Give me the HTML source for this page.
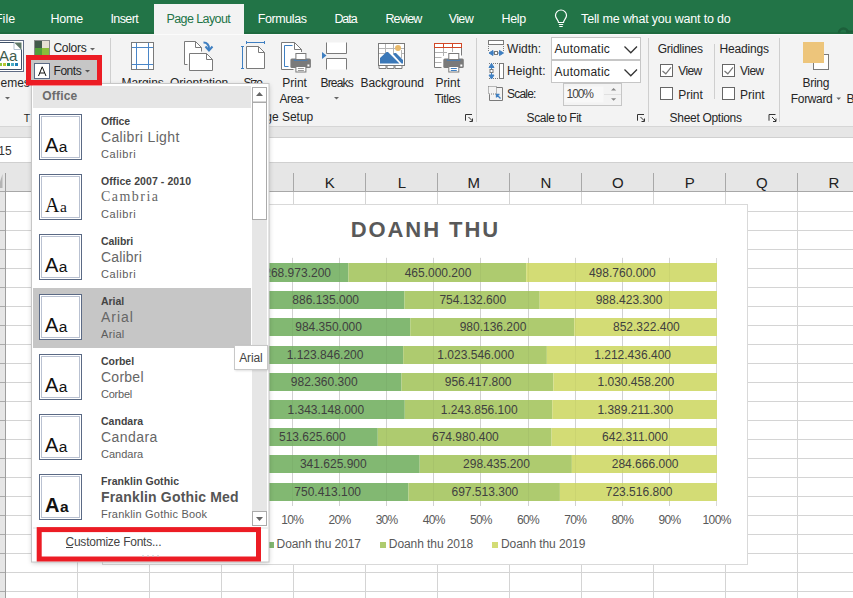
<!DOCTYPE html>
<html><head><meta charset="utf-8">
<style>
*{margin:0;padding:0;box-sizing:border-box}
html,body{width:853px;height:598px;overflow:hidden}
body{position:relative;background:#fff;font-family:"Liberation Sans",sans-serif}
.a{position:absolute}
.t{position:absolute;white-space:nowrap;line-height:1}
svg{position:absolute;overflow:visible}
</style></head><body>
<div class="a" style="left:0px;top:0px;width:853px;height:34px;background:#227447"></div>
<div class="a" style="left:0px;top:32px;width:853px;height:1px;background:#1f6b40"></div>
<div class="a" style="left:0px;top:33px;width:853px;height:1px;background:#1d6a3e"></div>
<div class="a" style="left:154px;top:4px;width:90px;height:30px;background:#f3f3f3"></div>
<div class="t" style="left:50.50px;top:13.42px;font-size:12.5px;color:#fff;letter-spacing:-0.215px;">Home</div>
<div class="t" style="left:110.50px;top:13.42px;font-size:12.5px;color:#fff;letter-spacing:-0.613px;">Insert</div>
<div class="t" style="left:257.70px;top:13.42px;font-size:12.5px;color:#fff;letter-spacing:-0.399px;">Formulas</div>
<div class="t" style="left:334.40px;top:13.42px;font-size:12.5px;color:#fff;letter-spacing:-1.068px;">Data</div>
<div class="t" style="left:385.40px;top:13.42px;font-size:12.5px;color:#fff;letter-spacing:-0.797px;">Review</div>
<div class="t" style="left:448.70px;top:13.42px;font-size:12.5px;color:#fff;letter-spacing:-0.623px;">View</div>
<div class="t" style="left:501.50px;top:13.42px;font-size:12.5px;color:#fff;letter-spacing:-0.370px;">Help</div>
<div class="t" style="left:581.10px;top:13.42px;font-size:12.5px;color:#fff;letter-spacing:-0.175px;">Tell me what you want to do</div>
<div class="t" style="left:-5.04px;top:13.42px;font-size:12.5px;color:#fff;">File</div>
<div class="t" style="left:166.40px;top:13.42px;font-size:12.5px;color:#227447;letter-spacing:-0.580px;">Page Layout</div>
<svg style="left:554px;top:10px" width="14" height="18" viewBox="0 0 14 18"><path d="M4.5 12.5 C4.5 10 1.5 8.5 1.5 5.5 A5.5 5.5 0 0 1 12.5 5.5 C12.5 8.5 9.5 10 9.5 12.5 Z" fill="none" stroke="#fff" stroke-width="1.2"/><path d="M4.8 14.5 H9.2 M5.3 16.5 H8.7" stroke="#fff" stroke-width="1.2"/></svg>
<svg style="left:0;top:0" width="853" height="34" viewBox="0 0 853 34"><path d="M839 33 A4.5 4.5 0 0 1 848 33" fill="none" stroke="#1c5f3a" stroke-width="2.5"/><path d="M846 31.5 H853" stroke="#1c5f3a" stroke-width="2"/></svg>
<div class="a" style="left:0px;top:34px;width:853px;height:92px;background:#f3f3f3"></div>
<div class="a" style="left:0px;top:34px;width:853px;height:1px;background:#fbfbfb"></div>
<div class="a" style="left:0px;top:126px;width:853px;height:1px;background:#d6d6d6"></div>
<div class="a" style="left:0px;top:127px;width:853px;height:10px;background:#e6e6e6"></div>
<div class="a" style="left:0px;top:137px;width:853px;height:1px;background:#d0d0d0"></div>
<div class="a" style="left:0px;top:138px;width:853px;height:24px;background:#fff"></div>
<div class="a" style="left:0px;top:162px;width:853px;height:1px;background:#d0d0d0"></div>
<div class="t" style="left:-1.75px;top:144.84px;font-size:12px;color:#333;">15</div>
<div class="a" style="left:0px;top:163px;width:853px;height:28px;background:#e6e6e6"></div>
<div class="a" style="left:0px;top:191px;width:853px;height:1px;background:#a8a8a8"></div>
<div class="a" style="left:5px;top:173px;width:1px;height:19px;background:#a8a8a8"></div>
<svg style="left:0;top:0" width="853" height="598" viewBox="0 0 853 598"><line x1="110.5" y1="38" x2="110.5" y2="122" stroke="#cfcfcf" stroke-width="1"/><line x1="476.5" y1="38" x2="476.5" y2="122" stroke="#cfcfcf" stroke-width="1"/><line x1="648.5" y1="38" x2="648.5" y2="122" stroke="#cfcfcf" stroke-width="1"/><line x1="779.5" y1="38" x2="779.5" y2="122" stroke="#cfcfcf" stroke-width="1"/><line x1="714.5" y1="44" x2="714.5" y2="99" stroke="#cfcfcf" stroke-width="1"/><rect x="-5.5" y="40.5" width="29" height="31" fill="#fff" stroke="#5f6b84"/><path d="M-3.5 42.5 H14 L21.5 50 V69.5 H-3.5" fill="#fff" stroke="#3e5068" stroke-width="1"/><path d="M14 42.5 H21.5 V50 Z" fill="#5f7868"/><path d="M14 42.5 V49.5 H21" fill="#fff" stroke="#9fb0c4" stroke-width="0.8"/><text x="-1" y="61" font-size="15" fill="#3f5b4b" font-family="Liberation Sans">Aa</text><rect x="-1" y="63" width="3" height="3" fill="#8dc63f"/><rect x="3" y="63" width="3" height="3" fill="#b8c832"/><rect x="7" y="63" width="3" height="3" fill="#1e9168"/><rect x="11" y="63" width="3" height="3" fill="#4bacc6"/><rect x="15" y="63" width="3" height="3" fill="#1f80b8"/><rect x="34.5" y="40.5" width="15" height="15" fill="none" stroke="#8a8a8a"/><rect x="35" y="41" width="7" height="7" fill="#42584a"/><rect x="42" y="41" width="7" height="7" fill="#e7e0d3"/><rect x="35" y="48" width="7" height="7" fill="#529f3a"/><rect x="42" y="48" width="7" height="7" fill="#8bbd3a"/><path d="M90 48 h5 l-2.5 2.5 z" fill="#666"/><rect x="28.5" y="57.5" width="71" height="25" fill="#c6c6c6" stroke="#ec1c24" stroke-width="5"/><rect x="34.5" y="63.5" width="15" height="15" fill="#fff" stroke="#5b6a85"/><path d="M38.5 76 L42.2 66.8 L46 76 M39.8 73 H44.6" fill="none" stroke="#111" stroke-width="1"/><path d="M85 70 h5 l-2.5 2.5 z" fill="#555"/><path d="M5 97 h5 l-2.5 2.5 z" fill="#666"/><rect x="131.5" y="42.5" width="22" height="27" fill="#fff" stroke="#7a7a7a"/><path d="M136.5 43 V69 M148.5 43 V69 M132 47.5 H153 M132 64.5 H153" stroke="#4a86c8" stroke-width="1"/><path d="M187.5 64.5 H184.5 V41.5 H195.5 L201.5 47.5 V51.5" fill="#fff" stroke="#7a7a7a"/><path d="M195.5 41.5 V47.5 H201.5" fill="none" stroke="#7a7a7a"/><path d="M189.5 53.5 H206.5 L212.5 59.5 V70.5 H189.5 Z" fill="#fff" stroke="#7a7a7a"/><path d="M206.5 53.5 V59.5 H212.5" fill="none" stroke="#7a7a7a"/><path d="M203.5 42.5 Q209 42.5 209 49" fill="none" stroke="#3f7fc1" stroke-width="2"/><path d="M205.5 46.5 L209 50.5 L212.5 46.5" fill="none" stroke="#3f7fc1" stroke-width="2"/><path d="M246.5 46.5 H258.5 L264.5 52.5 V68.5 H246.5 Z" fill="#fff" stroke="#7a7a7a"/><path d="M258.5 46.5 V52.5 H264.5" fill="none" stroke="#7a7a7a"/><path d="M246.5 42.5 H264.5 M246.5 41 V44 M264.5 41 V44 M242.5 46.5 V68.5 M241 46.5 H244 M241 68.5 H244" stroke="#3f7fc1" stroke-width="1"/><path d="M293.5 69.5 H281.5 V42.5 H294.5 L301.5 49.5 V52" fill="#fff" stroke="#7a7a7a"/><path d="M294.5 42.5 V49.5 H301.5" fill="none" stroke="#7a7a7a"/><path d="M292.5 45.5 H284.5 V66.5 H288.5" fill="none" stroke="#3f7fc1"/><rect x="290.4" y="58.5" width="20.5" height="9.5" rx="1.5" fill="#7a7a7a"/><rect x="293.9" y="59.5" width="13.5" height="1.2" fill="#3f7fc1"/><rect x="295.9" y="53.5" width="10" height="6" fill="#fff" stroke="#7a7a7a"/><rect x="295.9" y="66.5" width="10" height="5.5" fill="#fff" stroke="#7a7a7a"/><path d="M297.9 68.5 H303.9 M297.9 70.5 H303.9" stroke="#999" stroke-width="1"/><rect x="307.4" y="64.5" width="2" height="2" fill="#fff"/><path d="M326.5 42.5 V53.5 H346.5 V42.5" fill="#fff" stroke="#7a7a7a"/><path d="M326.5 69.5 V58.5 H346.5 V69.5" fill="#fff" stroke="#7a7a7a"/><path d="M322 52 L326.5 55.5 L322 59 Z" fill="#3f7fc1"/><path d="M334 97 h5 l-2.5 2.5 z" fill="#666"/><path d="M305 97 h5 l-2.5 2.5 z" fill="#666"/><rect x="378.5" y="43.5" width="26" height="22" fill="#fff" stroke="#7a7a7a"/><path d="M385.5 44 V58 M393.5 44 V54 M401.5 50 V58 M379 48.5 H404 M379 53.5 H385 M401 53.5 H404" stroke="#b5b5b5" stroke-width="1"/><path d="M380 58 L386.5 52 H388 L399.5 63.5 H380 Z" fill="#3b78b8"/><path d="M393 54 L394.5 53 H396 L403 60 V63.5 H401.5 Z" fill="#3b78b8"/><circle cx="398" cy="48" r="3" fill="#e8b96a"/><path d="M379 66 V68.5 H386 V66 M387 66 V68.5 H394 V66 M395 66 V68.5 H402 V66" fill="#fff" stroke="#7a7a7a" stroke-width="1"/><rect x="434.5" y="47.5" width="27" height="20" fill="#fff"/><path d="M434.5 47.5 V67.5 H441.5 M461.5 47.5 V55.5" fill="none" stroke="#7a7a7a"/><path d="M443.5 47.5 V56 M452.5 47.5 V52 M435 52.5 H447 M435 57.5 H441.5 M435 62.5 H441.5" stroke="#b0b0b0"/><rect x="435" y="48" width="26" height="19" fill="#fff" opacity="0"/><rect x="434.5" y="43.5" width="27" height="4" fill="#fff" stroke="#d24726"/><path d="M443.5 43.5 V47.5 M452.5 43.5 V47.5" stroke="#d24726"/><rect x="443.3" y="58.5" width="20.5" height="9.5" rx="1.5" fill="#7a7a7a"/><rect x="446.8" y="59.5" width="13.5" height="1.2" fill="#3f7fc1"/><rect x="448.8" y="53.5" width="10" height="6" fill="#fff" stroke="#7a7a7a"/><rect x="448.8" y="66.5" width="10" height="5.5" fill="#fff" stroke="#7a7a7a"/><path d="M450.8 68.5 H456.8 M450.8 70.5 H456.8" stroke="#3f7fc1" stroke-width="1"/><rect x="460.3" y="64.5" width="2" height="2" fill="#fff"/><path d="M465.5 120.7 V114.5 H472.0" fill="none" stroke="#333" stroke-width="1"/><path d="M468.5 117 L472.5 121 M472.5 118.5 V121.5 H469.5" fill="none" stroke="#333" stroke-width="1"/><path d="M637.5 120.7 V114.5 H644.0" fill="none" stroke="#333" stroke-width="1"/><path d="M640.5 117 L644.5 121 M644.5 118.5 V121.5 H641.5" fill="none" stroke="#333" stroke-width="1"/><path d="M769 120.7 V114.5 H775.5" fill="none" stroke="#333" stroke-width="1"/><path d="M772 117 L776 121 M776 118.5 V121.5 H773" fill="none" stroke="#333" stroke-width="1"/><rect x="488.5" y="40.5" width="15" height="4" fill="#fff" stroke="#7a7a7a"/><path d="M488.5 46 V52 M503.5 46 V52" stroke="#7a7a7a" stroke-dasharray="1 1"/><path d="M489 53 L493 50.5 V55.5 Z M503.5 53 L499.5 50.5 V55.5 Z M492 53 H500" fill="#3f7fc1" stroke="#3f7fc1" stroke-width="1"/><rect x="494.5" y="51.5" width="3" height="3" fill="#fff" stroke="#7a7a7a"/><rect x="499.5" y="63.5" width="4" height="15" fill="#fff" stroke="#7a7a7a"/><path d="M489 63.5 H498 M489 78.5 H498" stroke="#7a7a7a" stroke-dasharray="1 1"/><path d="M491.5 63.5 L489 67.5 H494 Z M491.5 79 L489 75 H494 Z M491.5 66 V76" fill="#3f7fc1" stroke="#3f7fc1"/><rect x="490" y="69.5" width="3" height="3" fill="#fff" stroke="#7a7a7a"/><path d="M496.5 87.5 H502.5 V100.5 H489.5 V94.5" fill="none" stroke="#7a7a7a"/><rect x="488.5" y="86.5" width="8" height="7.5" fill="none" stroke="#7a7a7a" stroke-dasharray="1 1"/><path d="M500.5 98.5 L496.5 94.5 M496.5 97.5 V94.5 H499.5" fill="none" stroke="#3f7fc1" stroke-width="1.3"/><rect x="551.5" y="37.5" width="89" height="22" fill="#fff" stroke="#c6c6c6"/><rect x="551.5" y="60.5" width="89" height="22" fill="#fff" stroke="#c6c6c6"/><path d="M624.5 46.5 L630.8 52.8 L637 46.5 M624.5 69.5 L630.8 75.8 L637 69.5" fill="none" stroke="#333" stroke-width="1.3"/><rect x="563.5" y="83.5" width="58" height="22" fill="#f3f3f3" stroke="#c6c6c6"/><rect x="564.5" y="86.5" width="39" height="16" fill="#f8f8f8"/><path d="M604 94.5 H621" stroke="#e0e0e0"/><path d="M611 90.5 L613.6 88 L616.2 90.5 Z M611 98.2 L613.6 100.7 L616.2 98.2 Z" fill="#888"/><rect x="660.5" y="64.5" width="12" height="12" fill="#fff" stroke="#666"/><path d="M662.5 71.0 L665.8 73.8 L671 67.3" fill="none" stroke="#777" stroke-width="1.2"/><rect x="660.5" y="87.5" width="12" height="12" fill="#fff" stroke="#666"/><rect x="722.5" y="64.5" width="12" height="12" fill="#fff" stroke="#666"/><path d="M724.5 71.0 L727.8 73.8 L733 67.3" fill="none" stroke="#777" stroke-width="1.2"/><rect x="722.5" y="87.5" width="12" height="12" fill="#fff" stroke="#666"/><rect x="813.5" y="54.5" width="15" height="15" fill="#fff" stroke="#7a7a7a"/><rect x="803" y="42" width="21" height="21" fill="#edc57b"/><path d="M836.4 97.5 h4.6 l-2.3 2.5 z" fill="#666"/></svg>
<div class="t" style="left:53.50px;top:42.24px;font-size:12px;color:#262626;letter-spacing:-0.295px;">Colors</div>
<div class="t" style="left:53.50px;top:65.44px;font-size:12px;color:#262626;letter-spacing:-0.453px;">Fonts</div>
<div class="t" style="left:121.60px;top:76.74px;font-size:12px;color:#262626;letter-spacing:-0.080px;">Margins</div>
<div class="t" style="left:170.10px;top:76.74px;font-size:12px;color:#262626;letter-spacing:-0.060px;">Orientation</div>
<div class="t" style="left:243.40px;top:76.74px;font-size:12px;color:#262626;letter-spacing:-1.248px;">Size</div>
<div class="t" style="left:282.30px;top:76.74px;font-size:12px;color:#262626;letter-spacing:-0.019px;">Print</div>
<div class="t" style="left:279.40px;top:92.74px;font-size:12px;color:#262626;letter-spacing:-0.450px;">Area</div>
<div class="t" style="left:320.50px;top:76.74px;font-size:12px;color:#262626;letter-spacing:-0.830px;">Breaks</div>
<div class="t" style="left:360.60px;top:76.74px;font-size:12px;color:#262626;letter-spacing:-0.083px;">Background</div>
<div class="t" style="left:435.40px;top:76.74px;font-size:12px;color:#262626;letter-spacing:-0.019px;">Print</div>
<div class="t" style="left:434.40px;top:92.74px;font-size:12px;color:#262626;letter-spacing:-0.365px;">Titles</div>
<div class="t" style="left:507.10px;top:42.94px;font-size:12px;color:#262626;letter-spacing:-0.002px;">Width:</div>
<div class="t" style="left:507.10px;top:65.44px;font-size:12px;color:#262626;letter-spacing:0.063px;">Height:</div>
<div class="t" style="left:507.10px;top:88.44px;font-size:12px;color:#262626;letter-spacing:-0.810px;">Scale:</div>
<div class="t" style="left:526.60px;top:111.64px;font-size:12px;color:#262626;letter-spacing:-0.448px;">Scale to Fit</div>
<div class="t" style="left:657.70px;top:42.84px;font-size:12px;color:#262626;letter-spacing:-0.256px;">Gridlines</div>
<div class="t" style="left:719.40px;top:42.84px;font-size:12px;color:#262626;letter-spacing:-0.172px;">Headings</div>
<div class="t" style="left:678.20px;top:65.44px;font-size:12px;color:#262626;letter-spacing:-0.565px;">View</div>
<div class="t" style="left:678.20px;top:88.54px;font-size:12px;color:#262626;letter-spacing:-0.019px;">Print</div>
<div class="t" style="left:740.10px;top:65.44px;font-size:12px;color:#262626;letter-spacing:-0.565px;">View</div>
<div class="t" style="left:740.10px;top:88.54px;font-size:12px;color:#262626;letter-spacing:-0.019px;">Print</div>
<div class="t" style="left:669.60px;top:111.54px;font-size:12px;color:#262626;letter-spacing:-0.304px;">Sheet Options</div>
<div class="t" style="left:802.60px;top:76.64px;font-size:12px;color:#262626;letter-spacing:-0.304px;">Bring</div>
<div class="t" style="left:790.80px;top:92.54px;font-size:12px;color:#262626;letter-spacing:-0.335px;">Forward</div>
<div class="t" style="left:846.40px;top:92.54px;font-size:12px;color:#262626;">B</div>
<div class="t" style="left:0.50px;top:76.84px;font-size:12px;color:#262626;">emes</div>
<div class="t" style="left:23.80px;top:112.61px;font-size:10.5px;color:#262626;">T</div>
<div class="t" style="left:250.58px;top:111.24px;font-size:12px;color:#262626;">Page Setup</div>
<div class="t" style="left:554.50px;top:42.94px;font-size:12px;color:#262626;letter-spacing:0.243px;">Automatic</div>
<div class="t" style="left:554.50px;top:65.54px;font-size:12px;color:#262626;letter-spacing:0.243px;">Automatic</div>
<div class="t" style="left:566.60px;top:88.24px;font-size:12px;color:#444;letter-spacing:-1.131px;">100%</div>
<svg style="left:0;top:0" width="853" height="598" viewBox="0 0 853 598"><rect x="0" y="192" width="5" height="406" fill="#e6e6e6"/><line x1="0" y1="211.5" x2="853" y2="211.5" stroke="#d4d4d4"/><line x1="0" y1="230.5" x2="853" y2="230.5" stroke="#d4d4d4"/><line x1="0" y1="249.5" x2="853" y2="249.5" stroke="#d4d4d4"/><line x1="0" y1="268.5" x2="853" y2="268.5" stroke="#d4d4d4"/><line x1="0" y1="287.5" x2="853" y2="287.5" stroke="#d4d4d4"/><line x1="0" y1="306.5" x2="853" y2="306.5" stroke="#d4d4d4"/><line x1="0" y1="325.5" x2="853" y2="325.5" stroke="#d4d4d4"/><line x1="0" y1="344.5" x2="853" y2="344.5" stroke="#d4d4d4"/><line x1="0" y1="363.5" x2="853" y2="363.5" stroke="#d4d4d4"/><line x1="0" y1="382.5" x2="853" y2="382.5" stroke="#d4d4d4"/><line x1="0" y1="401.5" x2="853" y2="401.5" stroke="#d4d4d4"/><line x1="0" y1="420.5" x2="853" y2="420.5" stroke="#d4d4d4"/><line x1="0" y1="439.5" x2="853" y2="439.5" stroke="#d4d4d4"/><line x1="0" y1="458.5" x2="853" y2="458.5" stroke="#d4d4d4"/><line x1="0" y1="477.5" x2="853" y2="477.5" stroke="#d4d4d4"/><line x1="0" y1="496.5" x2="853" y2="496.5" stroke="#d4d4d4"/><line x1="0" y1="515.5" x2="853" y2="515.5" stroke="#d4d4d4"/><line x1="0" y1="534.5" x2="853" y2="534.5" stroke="#d4d4d4"/><line x1="0" y1="553.5" x2="853" y2="553.5" stroke="#d4d4d4"/><line x1="0" y1="572.5" x2="853" y2="572.5" stroke="#d4d4d4"/><line x1="0" y1="591.5" x2="853" y2="591.5" stroke="#d4d4d4"/><line x1="77.5" y1="192" x2="77.5" y2="598" stroke="#d4d4d4"/><line x1="77.5" y1="173" x2="77.5" y2="191" stroke="#a8a8a8"/><line x1="149.5" y1="192" x2="149.5" y2="598" stroke="#d4d4d4"/><line x1="149.5" y1="173" x2="149.5" y2="191" stroke="#a8a8a8"/><line x1="221.5" y1="192" x2="221.5" y2="598" stroke="#d4d4d4"/><line x1="221.5" y1="173" x2="221.5" y2="191" stroke="#a8a8a8"/><line x1="293.5" y1="192" x2="293.5" y2="598" stroke="#d4d4d4"/><line x1="293.5" y1="173" x2="293.5" y2="191" stroke="#a8a8a8"/><line x1="365.5" y1="192" x2="365.5" y2="598" stroke="#d4d4d4"/><line x1="365.5" y1="173" x2="365.5" y2="191" stroke="#a8a8a8"/><line x1="437.5" y1="192" x2="437.5" y2="598" stroke="#d4d4d4"/><line x1="437.5" y1="173" x2="437.5" y2="191" stroke="#a8a8a8"/><line x1="509.5" y1="192" x2="509.5" y2="598" stroke="#d4d4d4"/><line x1="509.5" y1="173" x2="509.5" y2="191" stroke="#a8a8a8"/><line x1="581.5" y1="192" x2="581.5" y2="598" stroke="#d4d4d4"/><line x1="581.5" y1="173" x2="581.5" y2="191" stroke="#a8a8a8"/><line x1="653.5" y1="192" x2="653.5" y2="598" stroke="#d4d4d4"/><line x1="653.5" y1="173" x2="653.5" y2="191" stroke="#a8a8a8"/><line x1="725.5" y1="192" x2="725.5" y2="598" stroke="#d4d4d4"/><line x1="725.5" y1="173" x2="725.5" y2="191" stroke="#a8a8a8"/><line x1="797.5" y1="192" x2="797.5" y2="598" stroke="#d4d4d4"/><line x1="797.5" y1="173" x2="797.5" y2="191" stroke="#a8a8a8"/><line x1="0" y1="211.5" x2="5" y2="211.5" stroke="#ababab"/><line x1="0" y1="230.5" x2="5" y2="230.5" stroke="#ababab"/><line x1="0" y1="249.5" x2="5" y2="249.5" stroke="#ababab"/><line x1="0" y1="268.5" x2="5" y2="268.5" stroke="#ababab"/><line x1="0" y1="287.5" x2="5" y2="287.5" stroke="#ababab"/><line x1="0" y1="306.5" x2="5" y2="306.5" stroke="#ababab"/><line x1="0" y1="325.5" x2="5" y2="325.5" stroke="#ababab"/><line x1="0" y1="344.5" x2="5" y2="344.5" stroke="#ababab"/><line x1="0" y1="363.5" x2="5" y2="363.5" stroke="#ababab"/><line x1="0" y1="382.5" x2="5" y2="382.5" stroke="#ababab"/><line x1="0" y1="401.5" x2="5" y2="401.5" stroke="#ababab"/><line x1="0" y1="420.5" x2="5" y2="420.5" stroke="#ababab"/><line x1="0" y1="439.5" x2="5" y2="439.5" stroke="#ababab"/><line x1="0" y1="458.5" x2="5" y2="458.5" stroke="#ababab"/><line x1="0" y1="477.5" x2="5" y2="477.5" stroke="#ababab"/><line x1="0" y1="496.5" x2="5" y2="496.5" stroke="#ababab"/><line x1="0" y1="515.5" x2="5" y2="515.5" stroke="#ababab"/><line x1="0" y1="534.5" x2="5" y2="534.5" stroke="#ababab"/><line x1="0" y1="553.5" x2="5" y2="553.5" stroke="#ababab"/><line x1="0" y1="572.5" x2="5" y2="572.5" stroke="#ababab"/><line x1="0" y1="591.5" x2="5" y2="591.5" stroke="#ababab"/><line x1="5.5" y1="173" x2="5.5" y2="598" stroke="#9e9e9e"/><path d="M-2 188 L2.5 188 L2.5 174 Z" fill="#b4b4b4"/></svg>
<div class="t" style="left:324.80px;top:174.90px;font-size:15px;color:#222;">K</div>
<div class="t" style="left:397.63px;top:174.90px;font-size:15px;color:#222;">L</div>
<div class="t" style="left:467.55px;top:174.90px;font-size:15px;color:#222;">M</div>
<div class="t" style="left:540.38px;top:174.90px;font-size:15px;color:#222;">N</div>
<div class="t" style="left:611.97px;top:174.90px;font-size:15px;color:#222;">O</div>
<div class="t" style="left:684.80px;top:174.90px;font-size:15px;color:#222;">P</div>
<div class="t" style="left:755.97px;top:174.90px;font-size:15px;color:#222;">Q</div>
<div class="t" style="left:828.38px;top:174.90px;font-size:15px;color:#222;">R</div>
<svg style="left:0;top:0" width="853" height="598" viewBox="0 0 853 598"><rect x="102.5" y="204.5" width="645" height="360" fill="#fff" stroke="#d9d9d9"/><line x1="245.5" y1="258" x2="245.5" y2="506" stroke="#d9d9d9"/><line x1="292.5" y1="258" x2="292.5" y2="506" stroke="#d9d9d9"/><line x1="339.5" y1="258" x2="339.5" y2="506" stroke="#d9d9d9"/><line x1="386.5" y1="258" x2="386.5" y2="506" stroke="#d9d9d9"/><line x1="433.5" y1="258" x2="433.5" y2="506" stroke="#d9d9d9"/><line x1="480.5" y1="258" x2="480.5" y2="506" stroke="#d9d9d9"/><line x1="528.5" y1="258" x2="528.5" y2="506" stroke="#d9d9d9"/><line x1="575.5" y1="258" x2="575.5" y2="506" stroke="#d9d9d9"/><line x1="622.5" y1="258" x2="622.5" y2="506" stroke="#d9d9d9"/><line x1="669.5" y1="258" x2="669.5" y2="506" stroke="#d9d9d9"/><line x1="716.5" y1="258" x2="716.5" y2="506" stroke="#d9d9d9"/><rect x="245.50" y="263.00" width="102.88" height="19" fill="#82b872"/><rect x="348.38" y="263.00" width="177.85" height="19" fill="#aecb6f"/><rect x="526.23" y="263.00" width="190.77" height="19" fill="#d3dc75"/><rect x="245.50" y="291.00" width="158.94" height="18" fill="#82b872"/><rect x="404.44" y="291.00" width="135.27" height="18" fill="#aecb6f"/><rect x="539.71" y="291.00" width="177.29" height="18" fill="#d3dc75"/><rect x="245.50" y="318.00" width="164.77" height="18" fill="#82b872"/><rect x="410.27" y="318.00" width="164.06" height="18" fill="#aecb6f"/><rect x="574.33" y="318.00" width="142.67" height="18" fill="#d3dc75"/><rect x="245.50" y="346.00" width="157.71" height="18" fill="#82b872"/><rect x="403.21" y="346.00" width="143.64" height="18" fill="#aecb6f"/><rect x="546.85" y="346.00" width="170.15" height="18" fill="#d3dc75"/><rect x="245.50" y="373.00" width="155.99" height="18" fill="#82b872"/><rect x="401.49" y="373.00" width="151.87" height="18" fill="#aecb6f"/><rect x="553.37" y="373.00" width="163.63" height="18" fill="#d3dc75"/><rect x="245.50" y="400.00" width="159.27" height="19" fill="#82b872"/><rect x="404.77" y="400.00" width="147.50" height="19" fill="#aecb6f"/><rect x="552.27" y="400.00" width="164.73" height="19" fill="#d3dc75"/><rect x="245.50" y="428.00" width="132.27" height="18" fill="#82b872"/><rect x="377.77" y="428.00" width="173.82" height="18" fill="#aecb6f"/><rect x="551.59" y="428.00" width="165.41" height="18" fill="#d3dc75"/><rect x="245.50" y="455.00" width="174.19" height="18" fill="#82b872"/><rect x="419.69" y="455.00" width="152.17" height="18" fill="#aecb6f"/><rect x="571.85" y="455.00" width="145.15" height="18" fill="#d3dc75"/><rect x="245.50" y="483.00" width="162.94" height="18" fill="#82b872"/><rect x="408.44" y="483.00" width="151.46" height="18" fill="#aecb6f"/><rect x="559.90" y="483.00" width="157.10" height="18" fill="#d3dc75"/><line x1="292.5" y1="257" x2="292.5" y2="506" stroke="rgba(0,0,0,0.035)"/><line x1="339.5" y1="257" x2="339.5" y2="506" stroke="rgba(0,0,0,0.035)"/><line x1="386.5" y1="257" x2="386.5" y2="506" stroke="rgba(0,0,0,0.035)"/><line x1="433.5" y1="257" x2="433.5" y2="506" stroke="rgba(0,0,0,0.035)"/><line x1="480.5" y1="257" x2="480.5" y2="506" stroke="rgba(0,0,0,0.035)"/><line x1="528.5" y1="257" x2="528.5" y2="506" stroke="rgba(0,0,0,0.035)"/><line x1="575.5" y1="257" x2="575.5" y2="506" stroke="rgba(0,0,0,0.035)"/><line x1="622.5" y1="257" x2="622.5" y2="506" stroke="rgba(0,0,0,0.035)"/><line x1="669.5" y1="257" x2="669.5" y2="506" stroke="rgba(0,0,0,0.035)"/></svg>
<div class="t" style="left:264.27px;top:266.84px;font-size:12px;color:#404040;letter-spacing:0.000px;">268.973.200</div>
<div class="t" style="left:404.64px;top:266.84px;font-size:12px;color:#404040;letter-spacing:0.000px;">465.000.200</div>
<div class="t" style="left:588.95px;top:266.84px;font-size:12px;color:#404040;letter-spacing:0.000px;">498.760.000</div>
<div class="t" style="left:292.30px;top:294.34px;font-size:12px;color:#404040;letter-spacing:0.000px;">886.135.000</div>
<div class="t" style="left:439.41px;top:294.34px;font-size:12px;color:#404040;letter-spacing:0.000px;">754.132.600</div>
<div class="t" style="left:595.69px;top:294.34px;font-size:12px;color:#404040;letter-spacing:0.000px;">988.423.300</div>
<div class="t" style="left:295.22px;top:321.34px;font-size:12px;color:#404040;letter-spacing:0.000px;">984.350.000</div>
<div class="t" style="left:459.63px;top:321.34px;font-size:12px;color:#404040;letter-spacing:0.000px;">980.136.200</div>
<div class="t" style="left:613.00px;top:321.34px;font-size:12px;color:#404040;letter-spacing:0.000px;">852.322.400</div>
<div class="t" style="left:286.69px;top:349.34px;font-size:12px;color:#404040;letter-spacing:0.000px;">1.123.846.200</div>
<div class="t" style="left:437.36px;top:349.34px;font-size:12px;color:#404040;letter-spacing:0.000px;">1.023.546.000</div>
<div class="t" style="left:594.26px;top:349.34px;font-size:12px;color:#404040;letter-spacing:0.000px;">1.212.436.400</div>
<div class="t" style="left:290.83px;top:376.34px;font-size:12px;color:#404040;letter-spacing:0.000px;">982.360.300</div>
<div class="t" style="left:444.76px;top:376.34px;font-size:12px;color:#404040;letter-spacing:0.000px;">956.417.800</div>
<div class="t" style="left:597.51px;top:376.34px;font-size:12px;color:#404040;letter-spacing:0.000px;">1.030.458.200</div>
<div class="t" style="left:287.46px;top:403.84px;font-size:12px;color:#404040;letter-spacing:0.000px;">1.343.148.000</div>
<div class="t" style="left:440.85px;top:403.84px;font-size:12px;color:#404040;letter-spacing:0.000px;">1.243.856.100</div>
<div class="t" style="left:597.41px;top:403.84px;font-size:12px;color:#404040;letter-spacing:0.000px;">1.389.211.300</div>
<div class="t" style="left:278.97px;top:431.34px;font-size:12px;color:#404040;letter-spacing:0.000px;">513.625.600</div>
<div class="t" style="left:432.01px;top:431.34px;font-size:12px;color:#404040;letter-spacing:0.000px;">674.980.400</div>
<div class="t" style="left:602.07px;top:431.34px;font-size:12px;color:#404040;letter-spacing:0.000px;">642.311.000</div>
<div class="t" style="left:299.93px;top:458.34px;font-size:12px;color:#404040;letter-spacing:0.000px;">341.625.900</div>
<div class="t" style="left:463.10px;top:458.34px;font-size:12px;color:#404040;letter-spacing:0.000px;">298.435.200</div>
<div class="t" style="left:611.76px;top:458.34px;font-size:12px;color:#404040;letter-spacing:0.000px;">284.666.000</div>
<div class="t" style="left:294.30px;top:486.34px;font-size:12px;color:#404040;letter-spacing:0.000px;">750.413.100</div>
<div class="t" style="left:451.50px;top:486.34px;font-size:12px;color:#404040;letter-spacing:0.000px;">697.513.300</div>
<div class="t" style="left:605.78px;top:486.34px;font-size:12px;color:#404040;letter-spacing:0.000px;">723.516.800</div>
<div class="t" style="left:350.70px;top:219.18px;font-size:22px;color:#595959;font-weight:bold;letter-spacing:1.926px;">DOANH THU</div>
<div class="t" style="left:281.36px;top:513.84px;font-size:12px;color:#595959;letter-spacing:-0.721px;">10%</div>
<div class="t" style="left:328.51px;top:513.84px;font-size:12px;color:#595959;letter-spacing:-0.721px;">20%</div>
<div class="t" style="left:375.66px;top:513.84px;font-size:12px;color:#595959;letter-spacing:-0.721px;">30%</div>
<div class="t" style="left:422.81px;top:513.84px;font-size:12px;color:#595959;letter-spacing:-0.721px;">40%</div>
<div class="t" style="left:469.96px;top:513.84px;font-size:12px;color:#595959;letter-spacing:-0.721px;">50%</div>
<div class="t" style="left:517.11px;top:513.84px;font-size:12px;color:#595959;letter-spacing:-0.721px;">60%</div>
<div class="t" style="left:564.26px;top:513.84px;font-size:12px;color:#595959;letter-spacing:-0.721px;">70%</div>
<div class="t" style="left:611.41px;top:513.84px;font-size:12px;color:#595959;letter-spacing:-0.721px;">80%</div>
<div class="t" style="left:658.56px;top:513.84px;font-size:12px;color:#595959;letter-spacing:-0.721px;">90%</div>
<div class="t" style="left:702.57px;top:513.84px;font-size:12px;color:#595959;letter-spacing:-0.614px;">100%</div>
<div class="a" style="left:268.3px;top:542px;width:6px;height:6px;background:#82b872"></div>
<div class="t" style="left:276.60px;top:538.34px;font-size:12px;color:#595959;letter-spacing:-0.078px;">Doanh thu 2017</div>
<div class="a" style="left:380px;top:542px;width:6px;height:6px;background:#aecb6f"></div>
<div class="t" style="left:388.80px;top:538.34px;font-size:12px;color:#595959;letter-spacing:-0.078px;">Doanh thu 2018</div>
<div class="a" style="left:492.3px;top:542px;width:6px;height:6px;background:#d3dc75"></div>
<div class="t" style="left:501.00px;top:538.34px;font-size:12px;color:#595959;letter-spacing:-0.078px;">Doanh thu 2019</div>
<div class="a" style="left:32px;top:84px;width:237px;height:478px;box-shadow:0 1px 5px rgba(0,0,0,0.22)"></div>
<svg style="left:0;top:0" width="853" height="598" viewBox="0 0 853 598"><rect x="31.5" y="83.5" width="237.5" height="478.5" fill="#fff" stroke="#c6c6c6"/><rect x="33" y="86" width="218" height="22" fill="#e6e6e6"/><rect x="33" y="288" width="218" height="60" fill="#c6c6c6"/><rect x="39.5" y="114.5" width="42" height="45" fill="#fff" stroke="#5b6a85"/><rect x="41.5" y="116.5" width="38" height="41" fill="none" stroke="#b9c1d1"/><rect x="39.5" y="174.5" width="42" height="45" fill="#fff" stroke="#5b6a85"/><rect x="41.5" y="176.5" width="38" height="41" fill="none" stroke="#b9c1d1"/><rect x="39.5" y="234.5" width="42" height="45" fill="#fff" stroke="#5b6a85"/><rect x="41.5" y="236.5" width="38" height="41" fill="none" stroke="#b9c1d1"/><rect x="39.5" y="294.5" width="42" height="45" fill="#fff" stroke="#5b6a85"/><rect x="41.5" y="296.5" width="38" height="41" fill="none" stroke="#b9c1d1"/><rect x="39.5" y="354.5" width="42" height="45" fill="#fff" stroke="#5b6a85"/><rect x="41.5" y="356.5" width="38" height="41" fill="none" stroke="#b9c1d1"/><rect x="39.5" y="414.5" width="42" height="45" fill="#fff" stroke="#5b6a85"/><rect x="41.5" y="416.5" width="38" height="41" fill="none" stroke="#b9c1d1"/><rect x="39.5" y="474.5" width="42" height="45" fill="#fff" stroke="#5b6a85"/><rect x="41.5" y="476.5" width="38" height="41" fill="none" stroke="#b9c1d1"/><rect x="252" y="87" width="15" height="425" fill="#e6e6e6"/><rect x="252.5" y="87.5" width="14" height="14.5" fill="#fff" stroke="#ababab"/><rect x="252.5" y="102.5" width="14" height="117" fill="#fff" stroke="#ababab"/><rect x="252.5" y="511.5" width="14" height="14" fill="#fff" stroke="#ababab"/><path d="M256 96 L259.5 92 L263 96 Z M256 517 L259.5 521 L263 517 Z" fill="#666"/><line x1="33" y1="528" x2="268" y2="528" stroke="#e0e0e0"/><rect x="39.2" y="529.6" width="219.3" height="29.4" fill="none" stroke="#ec1c24" stroke-width="5"/><rect x="28.5" y="57.5" width="71" height="25.5" fill="none" stroke="#ec1c24" stroke-width="5"/><rect x="142" y="555.5" width="2" height="1" fill="#b8c4c8"/><rect x="147" y="555.5" width="2" height="1" fill="#b8c4c8"/><rect x="152" y="555.5" width="2" height="1" fill="#b8c4c8"/><rect x="157" y="555.5" width="2" height="1" fill="#b8c4c8"/></svg>
<div class="t" style="left:42.30px;top:89.64px;font-size:12px;color:#6b6b6b;font-weight:bold;letter-spacing:0.198px;">Office</div>
<div class="t" style="left:101.00px;top:116.11px;font-size:10.5px;color:#444;font-weight:bold;letter-spacing:-0.152px;">Office</div>
<div class="t" style="left:101.00px;top:130.15px;font-size:14px;color:#666;letter-spacing:0.364px;">Calibri Light</div>
<div class="t" style="left:101.00px;top:148.69px;font-size:11px;color:#5c5c5c;letter-spacing:0.587px;">Calibri</div>
<div class="t" style="left:45px;top:134.67px;font-size:20px;color:#111;">A<span style="font-size:15.5px;margin-left:0.5px">a</span></div>
<div class="t" style="left:101.00px;top:176.11px;font-size:10.5px;color:#444;font-weight:bold;letter-spacing:0.075px;">Office 2007 - 2010</div>
<div class="t" style="left:101.00px;top:190.28px;font-size:14px;color:#666;font-family:'Liberation Serif',serif;letter-spacing:1.465px;">Cambria</div>
<div class="t" style="left:101.00px;top:208.69px;font-size:11px;color:#5c5c5c;letter-spacing:0.604px;">Calibri</div>
<div class="t" style="left:45px;top:194.67px;font-size:20px;color:#111;font-family:'Liberation Serif',serif;">A<span style="font-size:15.5px;margin-left:0.5px">a</span></div>
<div class="t" style="left:101.00px;top:236.11px;font-size:10.5px;color:#444;font-weight:bold;letter-spacing:-0.079px;">Calibri</div>
<div class="t" style="left:101.00px;top:250.15px;font-size:14px;color:#666;letter-spacing:0.187px;">Calibri</div>
<div class="t" style="left:101.00px;top:268.69px;font-size:11px;color:#5c5c5c;letter-spacing:0.604px;">Calibri</div>
<div class="t" style="left:45px;top:254.67px;font-size:20px;color:#111;">A<span style="font-size:15.5px;margin-left:0.5px">a</span></div>
<div class="t" style="left:101.00px;top:296.11px;font-size:10.5px;color:#444;font-weight:bold;letter-spacing:-0.061px;">Arial</div>
<div class="t" style="left:101.00px;top:310.15px;font-size:14px;color:#666;letter-spacing:0.948px;">Arial</div>
<div class="t" style="left:101.00px;top:328.69px;font-size:11px;color:#5c5c5c;letter-spacing:0.323px;">Arial</div>
<div class="t" style="left:45px;top:314.67px;font-size:20px;color:#111;">A<span style="font-size:15.5px;margin-left:0.5px">a</span></div>
<div class="t" style="left:101.00px;top:356.11px;font-size:10.5px;color:#444;font-weight:bold;letter-spacing:-0.031px;">Corbel</div>
<div class="t" style="left:101.00px;top:370.15px;font-size:14px;color:#666;letter-spacing:0.251px;">Corbel</div>
<div class="t" style="left:101.00px;top:388.69px;font-size:11px;color:#5c5c5c;letter-spacing:-0.241px;">Corbel</div>
<div class="t" style="left:45px;top:374.67px;font-size:20px;color:#111;">A<span style="font-size:15.5px;margin-left:0.5px">a</span></div>
<div class="t" style="left:101.00px;top:416.11px;font-size:10.5px;color:#444;font-weight:bold;letter-spacing:0.031px;">Candara</div>
<div class="t" style="left:101.00px;top:430.15px;font-size:14px;color:#666;letter-spacing:0.432px;">Candara</div>
<div class="t" style="left:101.00px;top:448.69px;font-size:11px;color:#5c5c5c;letter-spacing:0.000px;">Candara</div>
<div class="t" style="left:45px;top:434.67px;font-size:20px;color:#111;">A<span style="font-size:15.5px;margin-left:0.5px">a</span></div>
<div class="t" style="left:101.00px;top:476.11px;font-size:10.5px;color:#444;font-weight:bold;letter-spacing:0.071px;">Franklin Gothic</div>
<div class="t" style="left:101.00px;top:490.15px;font-size:14px;color:#555;font-weight:bold;letter-spacing:0.168px;">Franklin Gothic Med</div>
<div class="t" style="left:101.00px;top:508.69px;font-size:11px;color:#5c5c5c;letter-spacing:0.210px;">Franklin Gothic Book</div>
<div class="t" style="left:45px;top:494.67px;font-size:20px;color:#111;font-weight:bold;">A<span style="font-size:15.5px;margin-left:0.5px">a</span></div>
<div class="t" style="left:65.50px;top:535.64px;font-size:12px;color:#444;letter-spacing:-0.237px;">Customize Fonts...</div>
<div class="a" style="left:65.5px;top:547px;width:7px;height:1px;background:#444"></div>
<div class="a" style="left:234px;top:345px;width:34px;height:25px;background:#fff;border:1px solid #c8c8c8;box-shadow:1px 1px 2px rgba(0,0,0,0.12)"></div>
<div class="t" style="left:239.20px;top:351.84px;font-size:12px;color:#444;letter-spacing:-0.127px;">Arial</div>
</body></html>
